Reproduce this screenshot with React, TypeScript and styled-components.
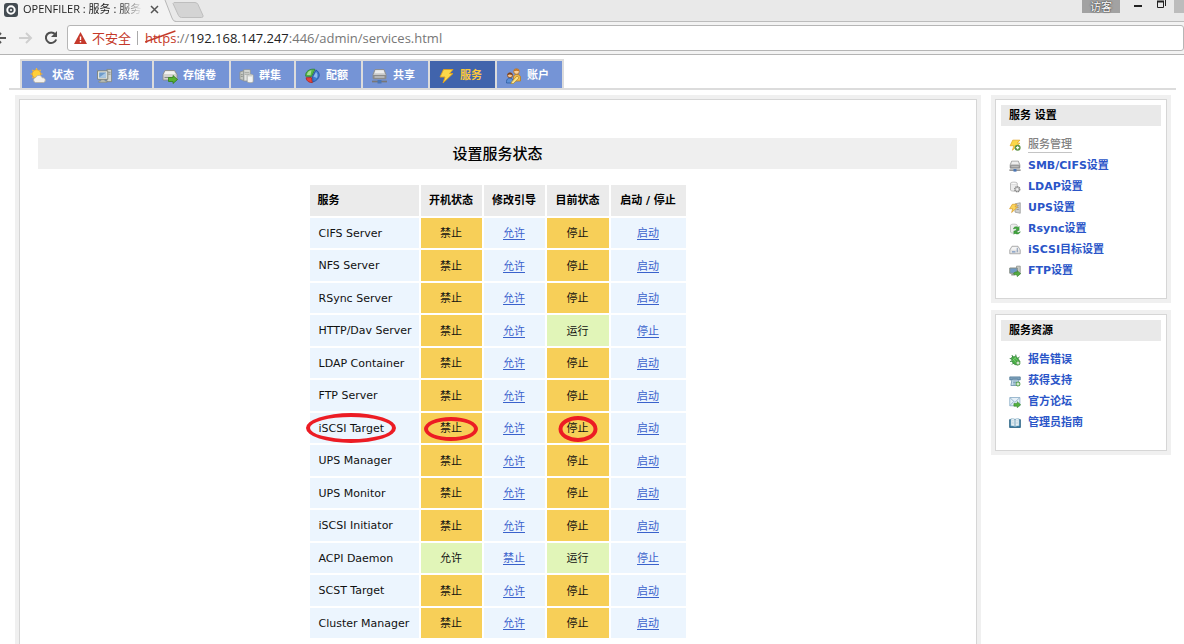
import React from "react";
import styled, { createGlobalStyle, css } from "styled-components";

const uiFont = `"DejaVu Sans", "Noto Sans CJK SC", sans-serif`;
const chromeFont = `"Open Sans", "Noto Sans CJK SC", sans-serif`;

const GlobalStyle = createGlobalStyle`
  *, *::before, *::after { box-sizing: border-box; }
  html { scrollbar-width: none; }
  body { margin: 0; background: #fff; font-family: ${uiFont}; font-size: 11px; color: #111; }
  button { font: inherit; border: 0; padding: 0; background: none; color: inherit; }
  ul { list-style: none; margin: 0; padding: 0; }
  svg { display: block; flex: none; }
`;

/* ---------- icons ---------- */

type IconName =
  | "weather" | "computer" | "drive" | "cluster" | "quota" | "share" | "bolt" | "users"
  | "boltAdd" | "ldap" | "ups" | "rsync" | "iscsi" | "ftp" | "bug" | "phone" | "mail" | "book";

const networkDrive = (
  <>
    <path d="M3.500 1.500h9l2 5v4h-13v-4z" fill="#c9c9c9" stroke="#8c8c8c" strokeWidth=".9" />
    <path d="M4 2.300h8l.9 3H3.100z" fill="#ededed" />
    <path d="M1.500 7h13v4.300h-13z" fill="#8b8b8b" />
    <path d="M3 9h10" stroke="#e8e8e8" strokeWidth=".9" />
    <path d="M.5 13.500h15" stroke="#777" strokeWidth="1.700" />
    <path d="M6 12h4v3.500H6z" fill="#4a76b5" />
  </>
);

const bolt = (
  <path d="M5 1.500h9.500l-3.500 4h3.500L4.500 15l2-6H1.500z" fill="#fbd84a" stroke="#e0a11d" strokeWidth=".9" strokeLinejoin="round" />
);

const glyphs: Record<IconName, React.ReactNode> = {
  weather: (
    <>
      <path d="M6 0v12M0 6h12M1.800 1.800l8.400 8.400M10.200 1.800 1.800 10.200" stroke="#f3b93a" strokeWidth="1.200" />
      <circle cx="6" cy="6" r="4.200" fill="#ffcf3a" stroke="#eda423" strokeWidth=".8" />
      <path d="M5 14.500a2.600 2.600 0 0 1 .3-5.100 3.400 3.400 0 0 1 6.400.4 2.400 2.400 0 0 1 1.300 4.700z" fill="#f3f1ec" stroke="#b9b2a4" strokeWidth=".8" />
    </>
  ),
  computer: (
    <>
      <path d="M10.500 1h5v13h-5z" fill="#d4d6cf" stroke="#7d8377" strokeWidth=".8" />
      <path d="M12 4h2.500M12 6h2.500" stroke="#6f756b" strokeWidth=".8" />
      <path d="M.5 2.500h11v9H.5z" fill="#e5e7e0" stroke="#757b70" strokeWidth=".9" />
      <path d="M2.300 4.200h7.400v5.500H2.300z" fill="#6e9ccb" />
      <path d="m2.300 9.700 7.400-5.500v5.500z" fill="#a9c8e4" />
      <path d="M4 11.800h4.500v1.500h2v1.500H2v-1.500h2z" fill="#b7bbb0" stroke="#757b70" strokeWidth=".5" />
    </>
  ),
  drive: (
    <>
      <path d="M3 2.500h9.500l2.500 4V12H1V6.500z" fill="#d3d3ce" stroke="#8a8a84" strokeWidth=".8" />
      <path d="M3.500 3.300h8.500L13.500 6H2z" fill="#f2f2ef" />
      <path d="M2.500 9.500h7" stroke="#888" />
      <path d="M6.500 9.500H11v-2l4.500 4-4.500 4v-2H6.500z" fill="#59b232" stroke="#2f7d17" strokeWidth=".8" />
    </>
  ),
  cluster: (
    <>
      <path d="M5 1.300h7v12H5z" fill="#e3e4e2" stroke="#8f938e" strokeWidth=".8" />
      <path d="M1 3.700 5 2.500v10.300L1 11.500z" fill="#c3c6c1" stroke="#8f938e" strokeWidth=".8" />
      <path d="M6 4h5M6 6h5M2 6.500h2M2 8.500h2" stroke="#83877f" strokeWidth=".8" />
      <path d="M8.700 7.500c0-1.800 6.500-1.800 6.500 0v6.300c0 1.800-6.500 1.800-6.500 0z" fill="#f3f4f2" stroke="#969a94" strokeWidth=".8" />
      <ellipse cx="11.900" cy="7.600" rx="2.700" ry="1" fill="#cfd1ce" />
    </>
  ),
  quota: (
    <>
      <path d="M7 8.500 1.200 8.200C.5 3.500 5 .5 10.500 1.300z" fill="#58b947" stroke="#2e8232" strokeWidth=".8" />
      <path d="M6 7 2.500 7c0-2.500 2-4.300 4.500-4.700z" fill="#a6dd93" />
      <path d="M6.800 9.500 1.500 9.800c.5 3.500 3.500 5 6.500 4.800z" fill="#e5433a" stroke="#a82420" strokeWidth=".8" />
      <path d="M8.500 14 8 8.500 11.500 2c4.500 2.500 5 9-3 12z" fill="#3f7cd0" stroke="#1f4d98" strokeWidth=".8" />
      <path d="m9 8.500 2.500-4.500c1.500 1.500 2 4 .8 6z" fill="#8fb8ec" />
    </>
  ),
  share: networkDrive,
  bolt,
  users: (
    <>
      <circle cx="11" cy="3.500" r="2.800" fill="#f7cf9b" stroke="#b3701f" strokeWidth=".8" />
      <path d="M8.300 3.200C8.500.3 13.500.3 13.700 3.200 12 2.500 10 2.500 8.300 3.200z" fill="#c27322" />
      <path d="M8 9c0-3.500 6.500-3.500 7 0v4H8z" fill="#f0b94c" stroke="#b87d20" strokeWidth=".8" />
      <circle cx="4.500" cy="7.300" r="2.500" fill="#f4c592" stroke="#7c3f1a" strokeWidth=".8" />
      <path d="M2 7C2 4 7 4 7 7 5.500 6.200 3.500 6.200 2 7z" fill="#7c3f1a" />
      <path d="M1 13.500c0-4.500 6.500-4.500 7 0V15H1z" fill="#5b8fd6" stroke="#2f5d9f" strokeWidth=".8" />
      <path d="m6 14 5.500-6 2 1.800L8 15.500l-2.500.3z" fill="#fbe38a" stroke="#ab842a" strokeWidth=".7" />
    </>
  ),
  boltAdd: (
    <>
      {bolt}
      <circle cx="11.500" cy="11.500" r="4" fill="#5d9448" />
      <path d="M11.500 9.500v4M9.500 11.500h4" stroke="#fff" strokeWidth="1.500" />
    </>
  ),
  ldap: (
    <>
      <path d="M2 3c0-2 9-2 9 0v9c0 2-9 2-9 0z" fill="#ececec" stroke="#aaa" />
      <ellipse cx="6.500" cy="3.300" rx="4" ry="1.300" fill="#fff" stroke="#bbb" strokeWidth=".6" />
      <circle cx="11" cy="11" r="3.300" fill="#ccc" stroke="#858585" strokeWidth="2" strokeDasharray="1.800 .7" />
      <circle cx="11" cy="11" r="1.300" fill="#f4f4f4" />
    </>
  ),
  ups: (
    <>
      <path d="M8 2.500 15 1v14l-7-1.500z" fill="#cdcecd" stroke="#949694" />
      <path d="M10 5h3M10 7.500h3M10 10h3" stroke="#888" />
      <path d="M4.500 3h6L8 6.500h3.500L3.500 14l1.500-5H.8z" fill="#fbd45a" stroke="#d89d2b" />
    </>
  ),
  rsync: (
    <>
      <path d="M2 3c0-2 9-2 9 0v9c0 2-9 2-9 0z" fill="#eee" stroke="#b3b3b3" />
      <path d="M6 8c0-3 4-4 6-2l1.500-1.500V10H8.500l1.800-1.800C9 7 7.500 7.500 6 8z" fill="#43a93d" stroke="#267d2a" strokeWidth=".6" />
      <path d="M15 11.500c-1 3.500-5 4-7 2L6.500 15v-4.500h5l-1.600 1.500c2 1 3.500.5 5.100-.5z" fill="#43a93d" stroke="#267d2a" strokeWidth=".6" />
    </>
  ),
  iscsi: (
    <>
      <path d="M4 3h8l3 5v5H1V8z" fill="#e2e2e2" stroke="#999" />
      <path d="M4.500 4h7L13.500 7.500h-11z" fill="#f5f5f5" />
      <path d="M4 10.500h4.500" stroke="#6d8fbf" strokeWidth="1.500" />
      <path d="M11 5v6" stroke="#8496b1" strokeWidth="1.300" />
    </>
  ),
  ftp: (
    <>
      <path d="M10 1.500h5V12h-5z" fill="#c6c9c5" stroke="#8d918b" />
      <path d="M1 4h10v7H1z" fill="#6f9ac5" stroke="#868c83" strokeWidth="1.300" />
      <path d="M3 13h5" stroke="#949991" strokeWidth="2" />
      <path d="M6 12c1-3 3-3 5-2.500v-2l4.500 4-4.500 4v-2c-2-.5-3.500-.5-5-1.500z" fill="#55aa43" stroke="#2f7d24" strokeWidth=".7" />
    </>
  ),
  bug: (
    <>
      <path d="m1 6 4 1M4 1.500 6 6M9 .8 9.500 5M1.500 10l4-1M14 4l-3 2.500M4 14l3-3" stroke="#287f31" strokeWidth="1.300" />
      <path d="M3.500 4.500c3-2 7.500-1 9 2l2 3.500-2.500 4.500c-4 .5-7-1.500-8-5z" fill="#48ae47" stroke="#26762c" strokeWidth=".8" />
      <path d="m5 6 6 7M7.500 5l6 6M4.500 9l5-5" stroke="#89d77e" strokeWidth=".8" />
      <circle cx="12" cy="12" r="3.300" fill="#4f9c45" />
      <path d="M12 10v4M10 12h4" stroke="#fff" strokeWidth="1.300" />
    </>
  ),
  phone: (
    <>
      <path d="M1 2.500h14v4h-3.500V5h-7v1.500H1z" fill="#7fa2bd" stroke="#4f7896" />
      <path d="M4 6h8l1.500 8h-11z" fill="#c7dce9" stroke="#5d87a5" />
      <path d="M5.500 8h5M5.500 10h5M5.500 12h3" stroke="#5d87a5" strokeWidth=".9" />
      <circle cx="12" cy="12" r="3.300" fill="#5aa251" />
      <path d="M12 10v4M10 12h4" stroke="#fff" strokeWidth="1.300" />
    </>
  ),
  mail: (
    <>
      <path d="M1 2h13.500v11H1z" fill="#e5f0f8" stroke="#80a6c2" />
      <path d="m1.500 2.500 6.300 6 6.200-6M1.500 12.500l4.500-5" fill="none" stroke="#80a6c2" />
      <path d="M6.500 10H11V7.500l4.500 4.200-4.500 4v-2.200H6.500z" fill="#55b13f" stroke="#2c7f22" strokeWidth=".7" />
    </>
  ),
  book: (
    <>
      <path d="M.8 3.500h14.400v10.500H.8z" fill="#3178a0" stroke="#215b7c" />
      <path d="M2.500 2.500C5 2 7 2.300 8 3.500v9.500c-1-1-3-1.300-5.500-1zM13.500 2.500C11 2 9 2.300 8 3.500v9.500c1-1 3-1.300 5.500-1z" fill="#f1f7fa" stroke="#6d9db9" strokeWidth=".8" />
      <path d="M4 5h2.500M4 7h2.500M4 9h2.500M9.500 5H12M9.500 7H12M9.500 9H12" stroke="#9ab9ca" strokeWidth=".7" />
    </>
  ),
};

const Icon = ({ name, width, height }: { name: IconName; width: number; height: number }) => (
  <svg width={width} height={height} viewBox="0 0 16 16" aria-hidden="true">
    {glyphs[name]}
  </svg>
);

/* ---------- browser frame ---------- */

const TabStrip = styled.div`
  display: flex;
  justify-content: space-between;
  height: 21px;
  background: #e9e9e9;
  font-family: ${chromeFont};
`;

const BrowserTab = styled.div`
  position: relative;
  display: flex;
  align-items: center;
  width: 206px;
  height: 22px;
  padding: 0 45px 4px 3px;
  z-index: 1;
`;

const TabOutline = styled.svg`
  position: absolute;
  left: 0;
  top: 0;
  z-index: -1;
`;

const TabTitle = styled.span`
  flex: 1;
  margin-left: 5px;
  overflow: hidden;
  white-space: nowrap;
  font-size: 11px;
  line-height: 18px;
  color: #222;
  mask-image: linear-gradient(to right, #000 80%, transparent);
`;

const IconButton = styled.button`
  display: flex;
  align-items: center;
  justify-content: center;
  flex: none;
`;

const WindowButtons = styled.div`
  display: flex;
  align-items: flex-start;
  height: 13px;
  gap: 14px;
`;

const GuestButton = styled.button`
  width: 38px;
  height: 13px;
  background: #a2a2a2;
  color: #fff;
  font-size: 11px;
  line-height: 8px;
  text-shadow: 0 0 2px #333, 0 0 1px #333;
`;

const CloseWindow = styled.button`
  width: 10px;
  height: 13px;
  margin-left: -6px;
  background: #bcbcbc;
`;

const Toolbar = styled.div`
  display: flex;
  align-items: center;
  height: 34px;
  border-top: 1px solid #bcbcbc;
  border-bottom: 1px solid #b4b4b4;
  background: #f3f3f3;
`;

const HistoryButtons = styled.div`
  display: flex;
  align-items: center;
  width: 67px;
`;

const AddressBar = styled.div`
  display: flex;
  align-items: center;
  flex: 1;
  height: 26px;
  padding-left: 6px;
  border: 1px solid #b6b6b6;
  border-radius: 3px;
  background: #fff;
  font-family: ${chromeFont};
  font-size: 13px;
  line-height: 24px;
  color: #777;
  white-space: nowrap;
`;

const Warning = styled.span`
  margin: 0 7px 0 5px;
  padding-right: 6px;
  border-right: 1px solid #aaa;
  line-height: 14px;
  color: #c53929;
`;

const Scheme = styled.span`
  position: relative;
  color: #c53929;
  svg { position: absolute; left: 0; top: 4px; width: 100%; }
`;

const Host = styled.span`
  color: #222;
`;

/* ---------- page ---------- */

const NavList = styled.ul`
  display: flex;
  height: 31px;
  margin: 4px 8px 0 9px;
  padding-left: 11px;
  border-bottom: 2px solid #dcdcdc;
`;

const NavItem = styled.li`
  border: solid #dcdcdc;
  border-width: 2px 0 0 2px;
  &:last-child { border-right-width: 2px; }
`;

const NavLink = styled.a<{ $active?: boolean }>`
  display: flex;
  align-items: center;
  gap: 5px;
  height: 100%;
  padding: 2px 13px 0 8px;
  background: ${(p) => (p.$active ? "#4164ac" : "#7594d6")};
  color: ${(p) => (p.$active ? "#fbc83c" : "#fff")};
  font-weight: bold;
  line-height: 16px;
  text-decoration: none;
`;

const Columns = styled.div`
  display: flex;
  align-items: flex-start;
  gap: 10px;
  padding: 5px 13px 0 15px;
`;

const panel = css`
  border: 4px solid #f0f0f0;
  outline: 1px solid #d6d6d6;
  outline-offset: -5px;
  background: #fff;
`;

const Main = styled.main`
  ${panel}
  flex: 1;
  min-width: 0;
  padding: 39px 20px 40px 19px;
`;

const Sidebar = styled.aside`
  display: flex;
  flex-direction: column;
  gap: 7px;
  width: 180px;
`;

const SideBox = styled.section`
  ${panel}
  padding: 6px 6px 18px;
`;

const SideTitle = styled.h2`
  margin: 0 0 8px;
  padding: 0 8px;
  background: #e9e9e9;
  font-size: 11px;
  line-height: 21px;
  color: #000;
`;

const SideItem = styled.li`
  display: flex;
  align-items: center;
  gap: 7px;
  height: 21px;
  padding-left: 8px;
`;

const SideLink = styled.a<{ $current?: boolean }>`
  color: ${(p) => (p.$current ? "#828282" : "#2a55c8")};
  border-bottom: 1px solid ${(p) => (p.$current ? "#c4c4c4" : "transparent")};
  font-weight: ${(p) => (p.$current ? 500 : 700)};
  line-height: 15px;
  text-decoration: none;
`;

const Title = styled.h1`
  margin: 0;
  padding-top: 1px;
  background: #efefef;
  font-size: 15px;
  font-weight: 500;
  line-height: 30px;
  color: #000;
  text-align: center;
`;

const ServiceTable = styled.table`
  margin: 14px auto 0;
  border-spacing: 2px;
  line-height: 14px;
`;

const HeadCell = styled.th<{ $width: number }>`
  width: ${(p) => p.$width}px;
  height: 31px;
  padding: 0;
  background: #ebebeb;
  color: #000;
  &:first-child { padding-left: 8px; text-align: left; }
`;

const Row = styled.tr`
  height: 30px;
  &:nth-child(even) { height: 31px; }
`;

const Cell = styled.td<{ $tone?: "on" | "off" }>`
  padding: 2px 0 0;
  text-align: center;
  background: ${(p) => (p.$tone === "on" ? "#e1f5b8" : p.$tone === "off" ? "#f7cf58" : "#ecf5fe")};
`;

const NameCell = styled.th`
  padding: 1px 0 0 9px;
  background: #ecf5fe;
  font-weight: normal;
  text-align: left;
`;

const ActionLink = styled.a`
  color: #3a62cc;
  text-decoration: underline;
  text-underline-offset: 2px;
`;

const Ringed = styled.span<{ $w: number; $h: number }>`
  position: relative;
  &::after {
    content: "";
    position: absolute;
    left: 50%;
    top: 50%;
    width: ${(p) => p.$w}px;
    height: ${(p) => p.$h}px;
    border: 4px solid #ec1c24;
    border-radius: 50%;
    transform: translate(-50%, -50%);
  }
`;

const navItems: { label: string; icon: IconName; size: number; active?: boolean }[] = [
  { label: "状态", icon: "weather", size: 17 },
  { label: "系统", icon: "computer", size: 15 },
  { label: "存储卷", icon: "drive", size: 16 },
  { label: "群集", icon: "cluster", size: 15 },
  { label: "配额", icon: "quota", size: 17 },
  { label: "共享", icon: "share", size: 17 },
  { label: "服务", icon: "bolt", size: 17, active: true },
  { label: "账户", icon: "users", size: 17 },
];

const settings: [IconName, string][] = [
  ["boltAdd", "服务管理"],
  ["share", "SMB/CIFS设置"],
  ["ldap", "LDAP设置"],
  ["ups", "UPS设置"],
  ["rsync", "Rsync设置"],
  ["iscsi", "iSCSI目标设置"],
  ["ftp", "FTP设置"],
];

const resources: [IconName, string][] = [
  ["bug", "报告错误"],
  ["phone", "获得支持"],
  ["mail", "官方论坛"],
  ["book", "管理员指南"],
];

const services: { name: string; boot?: boolean; running?: boolean; ringed?: boolean }[] = [
  { name: "CIFS Server" },
  { name: "NFS Server" },
  { name: "RSync Server" },
  { name: "HTTP/Dav Server", running: true },
  { name: "LDAP Container" },
  { name: "FTP Server" },
  { name: "iSCSI Target", ringed: true },
  { name: "UPS Manager" },
  { name: "UPS Monitor" },
  { name: "iSCSI Initiator" },
  { name: "ACPI Daemon", boot: true, running: true },
  { name: "SCST Target" },
  { name: "Cluster Manager" },
];

const columns: [string, number][] = [
  ["服务", 109],
  ["开机状态", 61],
  ["修改引导", 61],
  ["目前状态", 62],
  ["启动 / 停止", 75],
];

const ring = (on: boolean | undefined, text: string, w: number, h: number) =>
  on ? <Ringed $w={w} $h={h}>{text}</Ringed> : text;

const LinkBox = ({ title, links, current }: { title: string; links: [IconName, string][]; current?: string }) => (
  <SideBox>
    <SideTitle>{title}</SideTitle>
    <ul>
      {links.map(([icon, label]) => (
        <SideItem key={label}>
          <Icon name={icon} width={12} height={12} />
          <SideLink href="#" $current={label === current}>{label}</SideLink>
        </SideItem>
      ))}
    </ul>
  </SideBox>
);

const BrowserFrame = () => (
  <header>
    <TabStrip>
      <BrowserTab>
        <TabOutline width="206" height="22" aria-hidden="true">
          <path d="M0 0h165l7 18q1 3 4 4H0z" fill="#f3f3f3" />
          <path d="m165 0 7 18q1 3.500 4 3.500" fill="none" stroke="#b8b8b8" />
          <path d="M174 2.500h21q2 0 3 2l5 11q.5 2-1.500 2h-20q-2 0-3-2l-5.500-12z" fill="#d4d4d4" stroke="#bebebe" />
        </TabOutline>
        <svg width="15" height="15" viewBox="0 0 15 15" aria-hidden="true">
          <rect x="1" y="1" width="14" height="14" rx="3" fill="#444c52" />
          <circle cx="8" cy="8" r="3.700" fill="none" stroke="#fff" strokeWidth="2" />
          <circle cx="8" cy="8" r="1" fill="#fff" />
        </svg>
        <TabTitle>OPENFILER : 服务 : 服务</TabTitle>
        <IconButton aria-label="关闭标签页">
          <svg width="18" height="9" viewBox="0 0 18 9"><path d="m8 1 7 7m0-7L8 8" stroke="#555" strokeWidth="1.500" /></svg>
        </IconButton>
      </BrowserTab>
      <WindowButtons>
        <GuestButton>访客</GuestButton>
        <IconButton aria-label="最小化">
          <svg width="9" height="8"><path d="M0 6h8" stroke="#222" strokeWidth="2" /></svg>
        </IconButton>
        <IconButton aria-label="还原">
          <svg width="9" height="9"><path d="M.5 1.500h6v6h-6zM8.500 0v6" fill="none" stroke="#222" /><path d="M0 1.500h7" stroke="#222" strokeWidth="2" /></svg>
        </IconButton>
        <CloseWindow aria-label="关闭" />
      </WindowButtons>
    </TabStrip>
    <Toolbar>
      <HistoryButtons>
        <IconButton aria-label="后退">
          <svg width="19" height="14"><path d="M0 7h6M-4 7l5-5M-4 7l5 5" fill="none" stroke="#555" strokeWidth="2" /></svg>
        </IconButton>
        <IconButton aria-label="前进">
          <svg width="25" height="14"><path d="M0 7h12M7 2l5 5-5 5" fill="none" stroke="#cfcfcf" strokeWidth="2" /></svg>
        </IconButton>
        <IconButton aria-label="重新加载">
          <svg width="14" height="14"><path d="M11.300 3.300A5.300 5.300 0 1 0 12.200 8.500" fill="none" stroke="#4f4f4f" strokeWidth="2" /><path d="M13 0v6H7z" fill="#4f4f4f" /></svg>
        </IconButton>
      </HistoryButtons>
      <AddressBar role="textbox" aria-label="地址">
        <svg width="13" height="12" viewBox="0 0 13 12" aria-hidden="true">
          <path d="M6.500 0 13 12H0z" fill="#c5392b" />
          <path d="M6.500 4.500V8M6.500 9v1.500" stroke="#fff" strokeWidth="1.400" />
        </svg>
        <Warning>不安全</Warning>
        <Scheme>
          https
          <svg height="13" viewBox="0 0 32 13" preserveAspectRatio="none" aria-hidden="true">
            <path d="M0 12 31 1" stroke="#c53929" strokeWidth="1.500" />
          </svg>
        </Scheme>
        ://<Host>192.168.147.247</Host>:446/admin/services.html
      </AddressBar>
    </Toolbar>
  </header>
);

export default function App() {
  return (
    <>
      <GlobalStyle />
      <BrowserFrame />
      <nav>
        <NavList>
          {navItems.map((n) => (
            <NavItem key={n.label}>
              <NavLink href="#" $active={n.active}>
                <Icon name={n.icon} width={n.size} height={16} />
                {n.label}
              </NavLink>
            </NavItem>
          ))}
        </NavList>
      </nav>
      <Columns>
        <Main>
          <Title>设置服务状态</Title>
          <ServiceTable>
            <thead>
              <tr>
                {columns.map(([label, width]) => (
                  <HeadCell key={label} scope="col" $width={width}>{label}</HeadCell>
                ))}
              </tr>
            </thead>
            <tbody>
              {services.map((s) => (
                <Row key={s.name}>
                  <NameCell scope="row">{ring(s.ringed, s.name, 90, 30)}</NameCell>
                  <Cell $tone={s.boot ? "on" : "off"}>{ring(s.ringed, s.boot ? "允许" : "禁止", 54, 24)}</Cell>
                  <Cell><ActionLink href="#">{s.boot ? "禁止" : "允许"}</ActionLink></Cell>
                  <Cell $tone={s.running ? "on" : "off"}>{ring(s.ringed, s.running ? "运行" : "停止", 39, 26)}</Cell>
                  <Cell><ActionLink href="#">{s.running ? "停止" : "启动"}</ActionLink></Cell>
                </Row>
              ))}
            </tbody>
          </ServiceTable>
        </Main>
        <Sidebar>
          <LinkBox title="服务 设置" links={settings} current="服务管理" />
          <LinkBox title="服务资源" links={resources} />
        </Sidebar>
      </Columns>
    </>
  );
}
